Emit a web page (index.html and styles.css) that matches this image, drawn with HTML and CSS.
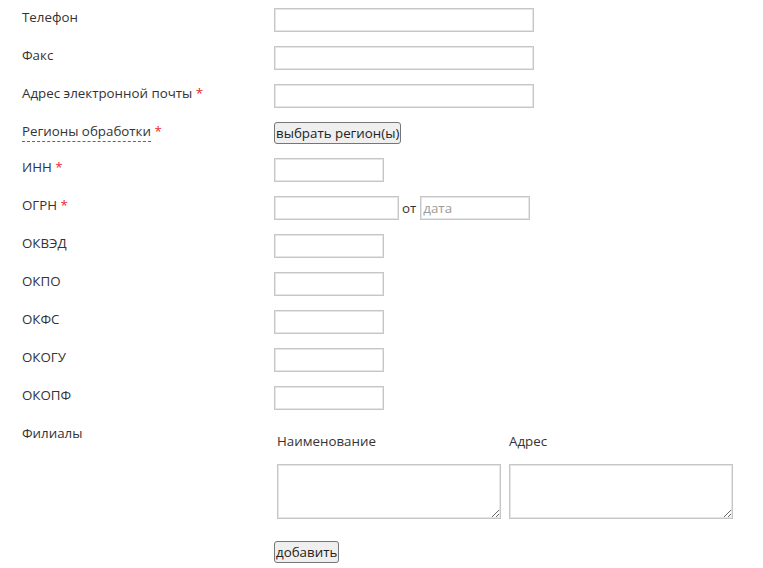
FILE: index.html
```html
<!DOCTYPE html>
<html lang="ru">
<head>
<meta charset="utf-8">
<title>Форма</title>
<link rel="stylesheet" href="styles.css">
</head>
<body>
<form class="form">
  <div class="label">Телефон</div>
  <div class="field"><input class="input input-long" type="text"></div>

  <div class="label">Факс</div>
  <div class="field"><input class="input input-long" type="text"></div>

  <div class="label">Адрес электронной почты <span class="req">*</span></div>
  <div class="field"><input class="input input-long" type="text"></div>

  <div class="label"><span class="dashed">Регионы обработки</span> <span class="req">*</span></div>
  <div class="field"><button class="btn" type="button">выбрать регион(ы)</button></div>

  <div class="label">ИНН <span class="req">*</span></div>
  <div class="field"><input class="input input-short" type="text"></div>

  <div class="label">ОГРН <span class="req">*</span></div>
  <div class="field field-inline">
    <input class="input input-mid" type="text">
    <span class="from">от</span>
    <input class="input input-short" type="text" placeholder="дата">
  </div>

  <div class="label">ОКВЭД</div>
  <div class="field"><input class="input input-short" type="text"></div>

  <div class="label">ОКПО</div>
  <div class="field"><input class="input input-short" type="text"></div>

  <div class="label">ОКФС</div>
  <div class="field"><input class="input input-short" type="text"></div>

  <div class="label">ОКОГУ</div>
  <div class="field"><input class="input input-short" type="text"></div>

  <div class="label">ОКОПФ</div>
  <div class="field"><input class="input input-short" type="text"></div>

  <div class="label">Филиалы</div>
  <div class="field branches">
    <div class="branch-grid">
      <div class="branch-head">Наименование</div>
      <div class="branch-head">Адрес</div>
      <textarea class="area"></textarea>
      <textarea class="area"></textarea>
    </div>
    <button class="btn btn-add" type="button">добавить</button>
  </div>
</form>
</body>
</html>
```

FILE: styles.css
```css
html, body {
  margin: 0;
  padding: 0;
  background: #ffffff;
}

body {
  font-family: "Open Sans", "Liberation Sans", sans-serif;
  font-size: 13.33px;
  line-height: 18px;
  color: #333333;
}

.form {
  display: grid;
  grid-template-columns: 252px auto;
  row-gap: 14px;
  padding: 8px 0 0 22px;
}

.label {
  line-height: 18px;
}

.req {
  color: #e8262a;
}

.dashed {
  border-bottom: 1px dashed #666666;
  padding-bottom: 1px;
}

.field {
  display: flex;
  align-items: center;
}

.input {
  box-sizing: border-box;
  height: 24px;
  margin: 0;
  padding: 0 2px;
  border: 1px solid #c6c6c6;
  box-shadow: inset 0 0 0 1px #e6e6e6;
  border-radius: 0;
  background: #ffffff;
  font-family: "Open Sans", "Liberation Sans", sans-serif;
  font-size: 13.33px;
  color: #333333;
  outline: none;
}

.input::placeholder {
  color: #9a9a9a;
}

.input-long {
  width: 260px;
}

.input-mid {
  width: 125px;
}

.input-short {
  width: 110px;
}

.from {
  margin: 0 4px 0 3px;
  color: #333333;
}

.btn {
  box-sizing: border-box;
  height: 22px;
  margin: 0;
  padding: 0 1px;
  border: 1px solid #767676;
  border-radius: 3px;
  background: #efefef;
  font-family: "Open Sans", "Liberation Sans", sans-serif;
  font-size: 13.33px;
  line-height: 18px;
  color: #222222;
}

.branches {
  display: flex;
  flex-direction: column;
  align-items: flex-start;
}

.branch-grid {
  display: grid;
  grid-template-columns: 224px 224px;
  column-gap: 8px;
  row-gap: 14px;
  padding: 8px 0 0 3px;
}

.branch-head {
  line-height: 18px;
}

.area {
  box-sizing: border-box;
  width: 224px;
  height: 55px;
  margin: 0;
  padding: 2px;
  border: 1px solid #c6c6c6;
  box-shadow: inset 0 0 0 1px #e6e6e6;
  background: #ffffff;
  font-family: "Open Sans", "Liberation Sans", sans-serif;
  font-size: 13.33px;
  outline: none;
}

.btn-add {
  margin-top: 22px;
}
```
